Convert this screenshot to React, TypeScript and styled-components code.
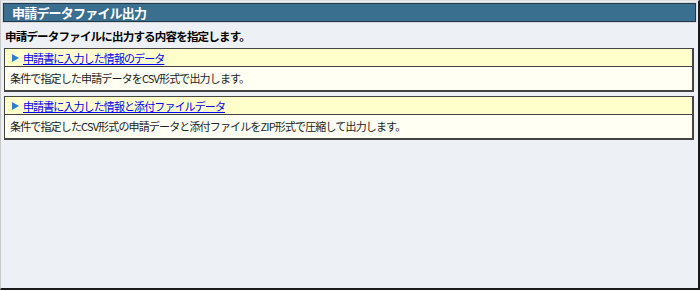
import React from 'react';
import styled, { createGlobalStyle } from 'styled-components';

const GlobalStyle = createGlobalStyle`
  html, body {
    margin: 0;
    padding: 0;
    background: #ffffff;
  }
  body {
    font-family: "Noto Sans CJK JP", "Liberation Sans", sans-serif;
    font-size: 12px;
    color: #000;
  }
`;

const Frame = styled.div`
  width: 700px;
  height: 290px;
  box-sizing: border-box;
  border-left: 1px solid #c8c8c8;
  border-top: 1px solid #e0e0e0;
  border-right: 2px solid #1a1a1a;
  border-bottom: 2px solid #1a1a1a;
  background: #edf1f5;
  padding: 2px 2px 0 2px;
`;

const TitleBar = styled.div`
  height: 19px;
  box-sizing: border-box;
  background: #3b6f90;
  border: 1px solid #1f3b4d;
  outline: 1px solid #d8d8d8;
  color: #ffffff;
  font-weight: bold;
  font-size: 13px;
  letter-spacing: -0.8px;
  line-height: 17px;
  padding-left: 8px;
`;

const Lead = styled.div`
  font-weight: bold;
  font-size: 11.5px;
  letter-spacing: -0.8px;
  line-height: 16px;
  padding: 6px 0 0 2px;
  height: 22px;
  box-sizing: border-box;
`;

const List = styled.div`
  display: flex;
  flex-direction: column;
  gap: 4px;
  padding: 4px 2px 0 1px;
`;

const Card = styled.div`
  border: 1px solid #444444;
  border-right-width: 2px;
  border-bottom-width: 2px;
`;

const CardHead = styled.div`
  background: #ffffcc;
  height: 18px;
  box-sizing: border-box;
  border-bottom: 1px solid #444444;
  display: flex;
  align-items: center;
  gap: 4px;
  padding-left: 7px;
`;

const Arrow = styled.span`
  width: 0;
  height: 0;
  border-top: 4px solid transparent;
  border-bottom: 4px solid transparent;
  border-left: 7px solid #2a7fd0;
`;

const Link = styled.a`
  color: #0000ee;
  text-decoration: underline;
  font-size: 11px;
  letter-spacing: -0.9px;
  line-height: 16px;
  cursor: pointer;
`;

const CardBody = styled.div`
  background: #fffff4;
  height: 23px;
  box-sizing: border-box;
  padding-left: 5px;
  font-size: 11px;
  letter-spacing: -0.85px;
  line-height: 23px;
  color: #222;
`;

const items = [
  {
    title: '申請書に入力した情報のデータ',
    desc: '条件で指定した申請データをCSV形式で出力します。',
  },
  {
    title: '申請書に入力した情報と添付ファイルデータ',
    desc: '条件で指定したCSV形式の申請データと添付ファイルをZIP形式で圧縮して出力します。',
  },
];

const App: React.FC = () => {
  return (
    <>
      <GlobalStyle />
      <Frame>
        <TitleBar>申請データファイル出力</TitleBar>
        <Lead>申請データファイルに出力する内容を指定します。</Lead>
        <List>
          {items.map((item) => (
            <Card key={item.title}>
              <CardHead>
                <Arrow />
                <Link>{item.title}</Link>
              </CardHead>
              <CardBody>{item.desc}</CardBody>
            </Card>
          ))}
        </List>
      </Frame>
    </>
  );
};

export default App;
